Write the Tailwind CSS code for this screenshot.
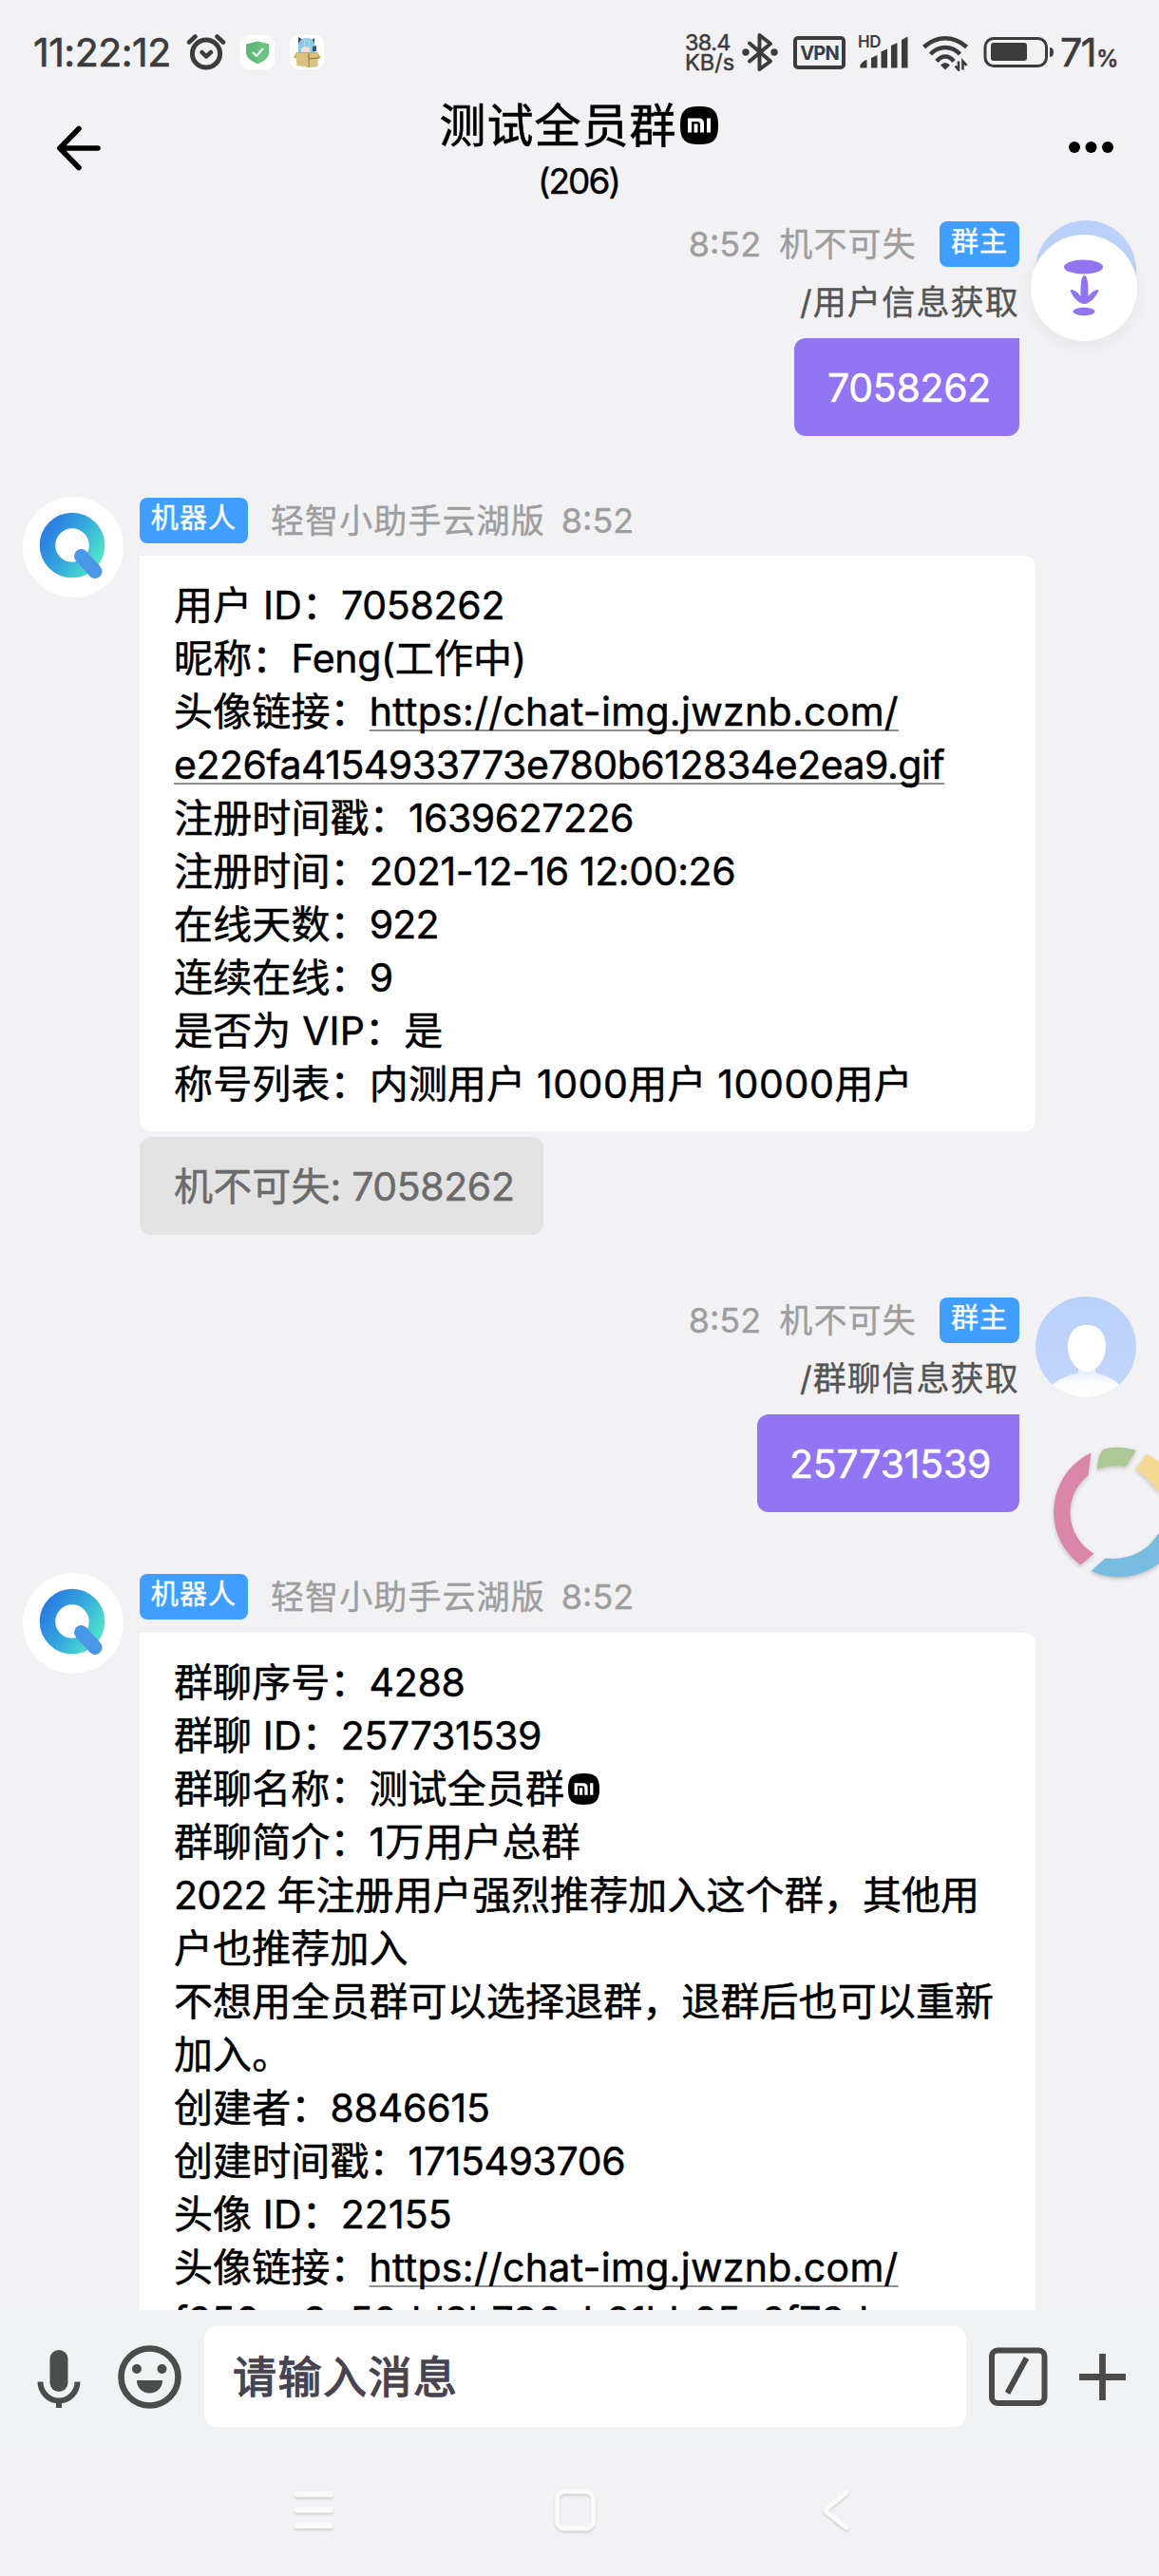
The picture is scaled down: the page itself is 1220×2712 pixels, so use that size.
<!DOCTYPE html>
<html lang="zh-CN">
<head>
<meta charset="utf-8">
<title>测试全员群</title>
<script src="https://cdn.jsdelivr.net/npm/@tailwindcss/browser@4"></script>
</head>
<body class="w-[1220px] h-[2712px] overflow-hidden relative flex flex-col bg-[#f2f2f5] text-black font-['Inter','Noto_Sans_CJK_SC',sans-serif]">

<!-- shared symbols -->
<svg width="0" height="0" class="absolute">
  <defs>
    <linearGradient id="qring" x1="0" y1="0.2" x2="1" y2="0.8"><stop offset="0" stop-color="#2b80e0"/><stop offset=".5" stop-color="#35a8dc"/><stop offset="1" stop-color="#4de0cc"/></linearGradient>
    <linearGradient id="body" x1="0" y1="0" x2="0" y2="1"><stop offset="0" stop-color="#dfe9fd"/><stop offset=".6" stop-color="#fff"/></linearGradient>
    <linearGradient id="sky" x1="0" y1="0" x2="0" y2="1"><stop offset="0" stop-color="#b9d1fa"/><stop offset="1" stop-color="#c4d7fb"/></linearGradient>
    <clipPath id="round"><circle cx="53" cy="53" r="53"/></clipPath>
    <symbol id="bot" viewBox="0 0 106 106">
      <circle cx="53" cy="53" r="53" fill="#fff"/>
      <circle cx="52" cy="51" r="26" fill="none" stroke="url(#qring)" stroke-width="16.5"/>
      <path d="M61.500 62.500L76 78.500" stroke="#4a97e8" stroke-width="15" stroke-linecap="round"/>
    </symbol>
    <symbol id="owner" viewBox="0 0 106 106">
      <g clip-path="url(#round)">
        <rect width="106" height="106" fill="url(#sky)"/>
        <path d="M45 74h18v6c10 3 21 7 27 15v12H16V95c6-8 19-12 29-15z" fill="url(#body)"/>
        <path d="M54 30c13 0 20 9 20 22 0 14-9 27-20 27S34 66 34 52c0-13 7-22 20-22z" fill="#fff"/>
      </g>
    </symbol>
    <symbol id="mi" viewBox="0 0 40 40">
      <path d="M20 0C35 0 40 5 40 20S35 40 20 40 0 35 0 20 5 0 20 0z" fill="#000"/>
      <path d="M8 27.500V12.500h11.500q5.500 0 5.500 5.500v9.500h-4v-8.500q0-3-3-3H12v11.500zM14.600 18.500h3.800v9h-3.800zM28 12.500h4v15h-4z" fill="#fff"/>
    </symbol>
  </defs>
</svg>

<!-- status bar -->
<div class="h-[104px] shrink-0 flex items-start text-[#3c3c3c]">
  <div class="ml-[35px] mt-[28px] w-[161px] text-[41px] leading-[54px] tracking-[-0.5px] [-webkit-text-stroke:0.7px]">11:22:12</div>
  <svg class="mt-[35px] w-[42px] h-[40px]" viewBox="0 0 42 40" fill="none" stroke="#3c3c3c" stroke-linecap="round">
    <circle cx="21" cy="21.500" r="14.600" stroke-width="5"/>
    <path d="M3 9.500L9.500 3.500M39 9.500L32.500 3.500" stroke-width="4.500"/>
    <path d="M16.500 20l4.500 4.500 5-4.500" stroke-width="4.500" stroke-linejoin="round"/>
  </svg>
  <div class="ml-[15px] mt-[37px] w-[36px] h-[36px] rounded-[9px] bg-white flex items-center justify-center">
    <svg class="w-[24px] h-[24px]" viewBox="0 0 24 24"><path d="M12 .5l12 3v8c0 6-5 10-12 12.500C5 21.500 0 17.500 0 11.500v-8z" fill="#5fb877"/><path d="M12 .5l12 3v8c0 6-5 10-12 12.500z" fill="#6cc282"/><path d="M7 12l4 4 7-8" fill="none" stroke="#fff" stroke-width="2"/></svg>
  </div>
  <div class="ml-[16px] mt-[37px] w-[36px] h-[36px] rounded-[9px] bg-white">
    <svg class="w-[36px] h-[36px]" viewBox="0 0 36 36">
      <path d="M9 2l5 3-5 6zM26 3l-4 3 4 6z" fill="#3f3f57"/>
      <path d="M9 20V11q1-8 9-8t8 8v9z" fill="#8ccbe4"/>
      <path d="M12 14q5-4 9 0v6h-9z" fill="#f3dcd6"/><path d="M16 5l-1 8M20 5l1 9" stroke="#b5e2f1"/>
      <path d="M24 12l4-1v6h-4z" fill="#4a4d66"/>
      <path d="M4 24l3-6h22l4 6z" fill="#cda75c"/>
      <path d="M6.500 19h13v15l-12-2zM20 19h9.500v14L20 34z" fill="#dcc17f"/>
      <path d="M20 19v15M20 25l11-1" stroke="#8a6f3c" stroke-width="1"/>
    </svg>
  </div>
  <div class="flex-1"></div>
  <div class="mt-[34px] w-[60px] text-[23.5px] leading-[21px] [-webkit-text-stroke:0.5px]"><div class="tracking-[-0.7px]">38.4</div><div class="tracking-[0px]">KB/s</div></div>
  <svg class="mt-[34px] w-[38px] h-[42px]" viewBox="0 0 38 42" fill="none" stroke="#3c3c3c" stroke-width="4">
    <path d="M8 11.500l22 19-11.500 8.500V3L30 12 8 30.500" stroke-linejoin="round" stroke-linecap="round"/>
    <circle cx="4" cy="21" r="3.700" fill="#3c3c3c" stroke="none"/><circle cx="34" cy="21" r="3.700" fill="#3c3c3c" stroke="none"/>
  </svg>
  <div class="ml-[16px] mt-[38px] w-[55px] h-[35px] rounded-[5px] border-4 border-[#3c3c3c] flex items-center justify-center text-[20px] leading-[20px] font-bold tracking-[-0.8px]">VPN</div>
  <div class="ml-[13px] mt-[37px] w-[53px] h-[35px] relative">
    <span class="absolute left-0 top-0 text-[17px] leading-[14px] font-semibold tracking-[-0.5px]">HD</span>
    <svg class="w-[53px] h-[35px]" viewBox="0 0 53 35" fill="#3c3c3c"><path d="M2.500 34.500v-3q3-5 7-5.500v8.500zM14 34.500V24l6.500-3v13.500zM24.500 34.500v-17l6.500-3v20zM35 34.500V11l6.500-3v26.500zM46 34.500V5l6.500-3.500v33z"/></svg>
  </div>
  <svg class="ml-[14px] mt-[37px] w-[50px] h-[38px]" viewBox="0 0 50 38" fill="none" stroke="#3c3c3c" stroke-width="4.600">
    <path d="M2.500 12.500Q13 3.300 25 3.300T47.500 12.500"/><path d="M9.500 20Q16 13 25 13t15.500 7"/><path d="M16 27.500Q20 22.500 25 22.500t9 5"/>
    <path d="M20 31.500q5-5 10 0l-5 5z" fill="#3c3c3c" stroke="none"/>
    <path d="M39 27.500v9l-3.500-4M43.500 36.500v-9l4 4.500" stroke-width="2.600"/>
  </svg>
  <svg class="ml-[15px] mt-[38px] w-[75px] h-[34px]" viewBox="0 0 75 34"><rect x="2" y="2.500" width="64.500" height="29" rx="9" fill="none" stroke="#3c3c3c" stroke-width="3"/><rect x="8" y="7" width="38" height="19" rx="3" fill="#3c3c3c"/><path d="M70 12q4 0 4 5t-4 5z" fill="#3c3c3c"/></svg>
  <div class="ml-[6px] mt-[28px] w-[104px] leading-[54px] text-[41px] [-webkit-text-stroke:0.7px] tracking-[-1.500px]">71<span class="text-[24px] tracking-normal ml-[1px]">%</span></div>
</div>

<!-- chat header -->
<div class="h-[116px] shrink-0 flex justify-between">
  <div class="w-[110px]"><svg class="ml-[58px] mt-[27px] w-[50px] h-[50px]" viewBox="0 0 50 50" fill="none" stroke="#000" stroke-width="5.600" stroke-linecap="round" stroke-linejoin="round"><path d="M45 25H5M25 4.500L5 25l20 20.500"/></svg></div>
  <div class="flex flex-col items-center mr-[2px]">
    <div class="flex items-center h-[56px] text-[49px] tracking-[1px] [-webkit-text-stroke:0.6px]"><span class="mt-[2px]">测试全员群</span><svg class="ml-[3px] w-[40px] h-[40px]"><use href="#mi"/></svg></div>
    <div class="h-[60px] leading-[62px] text-[37px] tracking-[-2px] [-webkit-text-stroke:0.4px]">(206)</div>
  </div>
  <div class="w-[110px]"><svg class="ml-[14px] mt-[43px] w-[50px] h-[16px]" viewBox="0 0 50 16"><circle cx="7" cy="8" r="6"/><circle cx="24.500" cy="8" r="6"/><circle cx="42" cy="8" r="6"/></svg></div>
</div>

<!-- messages -->
<div class="h-[2212px] shrink-0 overflow-hidden pt-[12px] text-[41px] leading-[56px]">

  <div class="flex justify-end pr-[24px] h-[291px]">
    <div class="flex flex-col items-end mr-[17px]">
      <div class="flex items-center h-[50px] text-[#9e9e9e] text-[35px] [-webkit-text-stroke:0.4px]"><span class="text-[36px] mr-[19px]">8:52</span><span class="tracking-[1.200px]">机不可失</span><span class="ml-[24px] w-[84px] h-[48px] rounded-[8px] bg-[#409eff] text-white text-[29px] leading-[44px] text-center tracking-[1px]">群主</span></div>
      <div class="h-[74px] leading-[72px] text-[35px] tracking-[1.200px] text-[#555] [-webkit-text-stroke:0.4px]">/用户信息获取</div>
      <div class="w-[237px] h-[103px] pl-[35px] leading-[104px] rounded-[12px] rounded-tr-none bg-[#9175f3] text-white [-webkit-text-stroke:0.5px] tracking-[-0.300px]">7058262</div>
    </div>
    <svg class="w-[106px] h-[106px]"><use href="#owner"/></svg>
  </div>

  <div class="flex pl-[24px] h-[842px]">
    <svg class="w-[106px] h-[106px]"><use href="#bot"/></svg>
    <div class="ml-[17px] flex flex-col items-start">
      <div class="flex items-center h-[50px] text-[#9e9e9e] text-[35px] [-webkit-text-stroke:0.4px]"><span class="w-[114px] h-[48px] rounded-[8px] bg-[#409eff] text-white text-[29px] leading-[44px] text-center tracking-[1.200px]">机器人</span><span class="ml-[24px] tracking-[1.100px]">轻智小助手云湖版</span><span class="ml-[17px] text-[36px]">8:52</span></div>
      <div class="mt-[12px] w-[943px] h-[606px] pt-[24px] px-[36px] rounded-[12px] rounded-tl-none bg-white whitespace-nowrap tracking-[0.150px] [-webkit-text-stroke:0.5px]">
        <div>用户 ID：<span class="tracking-[-0.300px]">7058262</span></div>
        <div>昵称：<span class="tracking-[-0.300px]">Feng(</span>工作中)</div>
        <div>头像链接：<span class="tracking-[0.300px] underline decoration-[#8f8f8f] decoration-[2px] underline-offset-[4px] [text-decoration-skip-ink:none]">https://chat-img.jwznb.com/</span></div>
        <div><span class="tracking-[-0.480px] underline decoration-[#8f8f8f] decoration-[2px] underline-offset-[4px] [text-decoration-skip-ink:none]">e226fa4154933773e780b612834e2ea9.gif</span></div>
        <div>注册时间戳：<span class="tracking-[-0.500px]">1639627226</span></div>
        <div>注册时间：<span class="tracking-[-0.400px]">2021-12-16 12:00:26</span></div>
        <div>在线天数：<span class="tracking-[-0.900px]">922</span></div>
        <div>连续在线：9</div>
        <div>是否为 VIP：是</div>
        <div>称号列表：内测用户 <span class="tracking-[0.500px]">1000</span>用户 <span class="tracking-[0.600px]">10000</span>用户</div>
      </div>
      <div class="mt-[6px] w-[425px] h-[103px] pl-[36px] rounded-[12px] bg-[#e3e3e3] text-[#6b6b6b] leading-[104px] tracking-[0.150px] [-webkit-text-stroke:0.5px] whitespace-nowrap">机不可失<span class="tracking-[-0.400px]">: 7058262</span></div>
    </div>
  </div>

  <div class="flex justify-end pr-[24px] h-[291px]">
    <div class="flex flex-col items-end mr-[17px]">
      <div class="flex items-center h-[50px] text-[#9e9e9e] text-[35px] [-webkit-text-stroke:0.4px]"><span class="text-[36px] mr-[19px]">8:52</span><span class="tracking-[1.200px]">机不可失</span><span class="ml-[24px] w-[84px] h-[48px] rounded-[8px] bg-[#409eff] text-white text-[29px] leading-[44px] text-center tracking-[1px]">群主</span></div>
      <div class="h-[74px] leading-[72px] text-[35px] tracking-[1.200px] text-[#555] [-webkit-text-stroke:0.4px]">/群聊信息获取</div>
      <div class="w-[276px] h-[103px] pl-[34px] leading-[104px] rounded-[12px] rounded-tr-none bg-[#9175f3] text-white [-webkit-text-stroke:0.5px] tracking-[-0.200px]">257731539</div>
    </div>
    <svg class="w-[106px] h-[106px]"><use href="#owner"/></svg>
  </div>

  <div class="flex pl-[24px]">
    <svg class="w-[106px] h-[106px]"><use href="#bot"/></svg>
    <div class="ml-[17px] flex flex-col items-start">
      <div class="flex items-center h-[50px] text-[#9e9e9e] text-[35px] [-webkit-text-stroke:0.4px]"><span class="w-[114px] h-[48px] rounded-[8px] bg-[#409eff] text-white text-[29px] leading-[44px] text-center tracking-[1.200px]">机器人</span><span class="ml-[24px] tracking-[1.100px]">轻智小助手云湖版</span><span class="ml-[17px] text-[36px]">8:52</span></div>
      <div class="mt-[13px] w-[943px] pt-[24px] pb-[23px] px-[36px] rounded-[12px] rounded-tl-none bg-white whitespace-nowrap tracking-[0.100px] [-webkit-text-stroke:0.5px]">
        <div>群聊序号：<span class="tracking-[-0.300px]">4288</span></div>
        <div>群聊 ID：<span class="tracking-[-0.300px]">257731539</span></div>
        <div class="flex items-center h-[56px]">群聊名称：测试全员群<svg class="ml-[4px] w-[33px] h-[33px]"><use href="#mi"/></svg></div>
        <div>群聊简介：1万用户总群</div>
        <div><span class="tracking-[-0.800px]">2022 </span>年注册用户强烈推荐加入这个群，其他用</div>
        <div>户也推荐加入</div>
        <div>不想用全员群可以选择退群，退群后也可以重新</div>
        <div>加入。</div>
        <div>创建者：<span class="tracking-[-0.200px]">8846615</span></div>
        <div>创建时间戳：<span class="tracking-[-0.400px]">1715493706</span></div>
        <div>头像 ID：22155</div>
        <div>头像链接：<span class="tracking-[0.300px] underline decoration-[#8f8f8f] decoration-[2px] underline-offset-[4px] [text-decoration-skip-ink:none]">https://chat-img.jwznb.com/</span></div>
        <div><span class="tracking-[-0.300px] underline decoration-[#8f8f8f] decoration-[2px] underline-offset-[4px]">f256ea9e50dd8b796eb21bb65a2f72d</span></div>
      </div>
    </div>
  </div>
</div>

<!-- message input -->
<div class="h-[141px] shrink-0 bg-[#f1f2f4] flex items-start">
  <svg class="ml-[39px] mt-[41px] w-[46px] h-[62px]" viewBox="0 0 46 62"><rect x="13.500" y="1" width="19" height="44" rx="9.500" fill="#4b4d4c"/><path d="M3.500 34.500a19.500 20 0 0 0 39 0M23 54v8" fill="none" stroke="#4b4d4c" stroke-width="6"/></svg>
  <svg class="ml-[39px] mt-[37px] w-[67px] h-[67px]" viewBox="0 0 67 67"><circle cx="33.500" cy="33.500" r="30" fill="none" stroke="#4b4d4c" stroke-width="6.600"/><circle cx="20" cy="25" r="5" fill="#4b4d4c"/><circle cx="46.500" cy="25" r="5" fill="#4b4d4c"/><path d="M20 37h27c0 8-6 13.500-13.500 13.500S20 45 20 37z" fill="#4b4d4c"/></svg>
  <div class="ml-[24px] mt-[17px] w-[802px] h-[106px] rounded-[14px] bg-white pl-[30px] leading-[106px] text-[46px] tracking-[1.500px] text-[#474350] [-webkit-text-stroke:1.300px]">请输入消息</div>
  <svg class="ml-[23px] mt-[38px] w-[63px] h-[64px]" viewBox="0 0 63 64" fill="none" stroke="#4a4a4a" stroke-width="6"><rect x="4" y="4.500" width="55.500" height="55.500" rx="6"/><path d="M20.500 49.500l20-37" /></svg>
  <svg class="ml-[33px] mt-[46px] w-[49px] h-[49px]" viewBox="0 0 49 49" fill="none" stroke="#4a4a4a" stroke-width="6.800"><path d="M0 24.500h49M24.500 0v49"/></svg>
</div>

<!-- navigation bar -->
<div class="flex-1 bg-[#f2f2f5] flex items-start pt-[46px]">
  <svg class="ml-[306px] w-[50px] h-[52px] [filter:drop-shadow(0_2px_1px_#00000022)]" viewBox="0 0 50 52" stroke="#fafafa" stroke-width="6" stroke-linecap="round"><path d="M7 7h35M7 23.500h35M7 40h35"/></svg>
  <svg class="ml-[224px] w-[52px] h-[52px] [filter:drop-shadow(0_2px_1px_#00000022)]" viewBox="0 0 52 52" fill="none" stroke="#fafafa" stroke-width="5"><rect x="6.500" y="4" width="38" height="39" rx="8"/></svg>
  <svg class="ml-[232px] w-[36px] h-[52px] [filter:drop-shadow(0_2px_1px_#00000022)]" viewBox="0 0 36 52" fill="none" stroke="#fafafa" stroke-width="5" stroke-linecap="round" stroke-linejoin="round"><path d="M27 5L6.500 22q-2 2 0 4L27 42"/></svg>
</div>

<!-- floating jump-to-message button -->
<div class="absolute left-[1085px] top-[247px] w-[112px] h-[112px] rounded-full bg-white shadow-[0_6px_20px_rgba(0,0,0,0.05)]">
  <svg class="w-[112px] h-[112px]" viewBox="0 0 112 112" fill="#9175f0"><ellipse cx="55.500" cy="34" rx="20.500" ry="7.500"/><path d="M56.500 43c3 0 4 8 4 17v5c3-4 7-7 10-7 1 0 1 1 .5 2-3 6-9 13-14.500 13s-12-7-14.500-13c-.5-1 0-2 1-2 3 0 7 3 9.500 7v-5c0-9 1-17 4-17z"/><ellipse cx="56" cy="81" rx="11.500" ry="4.200"/></svg>
</div>

<!-- floating ring widget -->
<svg class="absolute left-[1099px] top-[1515px] w-[121px] h-[156px] [filter:drop-shadow(0_2px_2px_#00000033)]" viewBox="0 0 121 156">
  <path d="M49.500 14.500A69 69 0 0 0 38.500 132.500L52.500 120.500A50 50 0 0 1 46.500 38z" fill="#d986a8"/>
  <path d="M56 31q0-12 6-20 15-5 35 1l-11 17q-16-3-30 3z" fill="#adc797"/>
  <path d="M108 16q10 5 21 14l-4 34q-10-20-29-32z" fill="#f6d993"/>
  <path d="M49.500 139A70 70 0 0 0 136 115L126 90Q106 130 64.500 125.500z" fill="#79bce2"/>
</svg>
</body>
</html>
